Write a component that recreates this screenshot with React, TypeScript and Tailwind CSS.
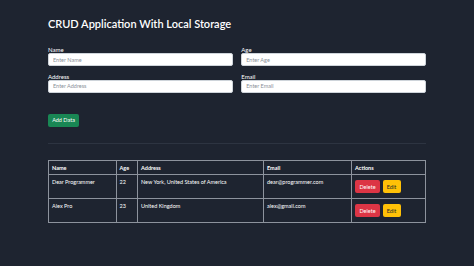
import { useState } from 'react';

type Person = {
  name: string;
  age: string;
  address: string;
  email: string;
};

const initial: Person[] = [
  { name: 'Dear Programmer', age: '22', address: 'New York, United States of America', email: 'dear@programmer.com' },
  { name: 'Alex Pro', age: '23', address: 'United Kingdom', email: 'alex@gmail.com' },
];

const Field = ({ label, placeholder }: { label: string; placeholder: string }) => (
  <div className="flex flex-col">
    <label className="text-[6px] leading-[7px] text-white">{label}</label>
    <input
      placeholder={placeholder}
      className="h-[13px] w-full rounded-[2px] border border-[#ced4da] bg-white px-[4px] text-[5.5px] text-[#212529] outline-none placeholder:text-[#8a9099]"
    />
  </div>
);

export default function App() {
  const [rows] = useState<Person[]>(initial);

  return (
    <div className="min-h-screen w-full bg-[#1e2430] font-['Lato','Liberation_Sans',sans-serif] text-white">
      <div className="mx-auto w-[378px] pt-[17px]">
        <h1 className="text-[11px] font-semibold leading-[14px]">CRUD Application With Local Storage</h1>

        <div className="mt-[15px] grid grid-cols-2 gap-x-[8.5px] gap-y-[6.5px]">
          <Field label="Name" placeholder="Enter Name" />
          <Field label="Age" placeholder="Enter Age" />
          <Field label="Address" placeholder="Enter Address" />
          <Field label="Email" placeholder="Enter Email" />
        </div>

        <button className="mt-[21px] h-[13px] w-[31px] rounded-[2px] bg-[#198754] text-[5.5px] text-white">
          Add Data
        </button>

        <hr className="mt-[15.5px] border-t border-[#2d3441]" />

        <table className="mt-[16px] w-full border-collapse text-[5.5px]">
          <thead>
            <tr className="h-[14px] text-left font-bold">
              <th className="w-[67.5px] border border-[#8d939d] px-[3px]">Name</th>
              <th className="w-[21.5px] border border-[#8d939d] px-[3px]">Age</th>
              <th className="w-[126px] border border-[#8d939d] px-[3px]">Address</th>
              <th className="w-[88px] border border-[#8d939d] px-[3px]">Email</th>
              <th className="border border-[#8d939d] px-[3px]">Actions</th>
            </tr>
          </thead>
          <tbody>
            {rows.map((r) => (
              <tr key={r.email} className="h-[24px] align-top">
                <td className="border border-[#8d939d] px-[3px] pt-[4px] leading-[7px]">{r.name}</td>
                <td className="border border-[#8d939d] px-[3px] pt-[4px] leading-[7px]">{r.age}</td>
                <td className="border border-[#8d939d] px-[3px] pt-[4px] leading-[7px]">{r.address}</td>
                <td className="border border-[#8d939d] px-[3px] pt-[4px] leading-[7px]">{r.email}</td>
                <td className="border border-[#8d939d] px-[3px] pt-[5px]">
                  <div className="flex gap-[2.5px]">
                    <button className="h-[13px] w-[25px] rounded-[2px] bg-[#dc3545] text-[5.5px] text-white">Delete</button>
                    <button className="h-[13px] w-[18px] rounded-[2px] bg-[#ffc107] text-[5.5px] text-[#212529]">Edit</button>
                  </div>
                </td>
              </tr>
            ))}
          </tbody>
        </table>
      </div>
    </div>
  );
}
